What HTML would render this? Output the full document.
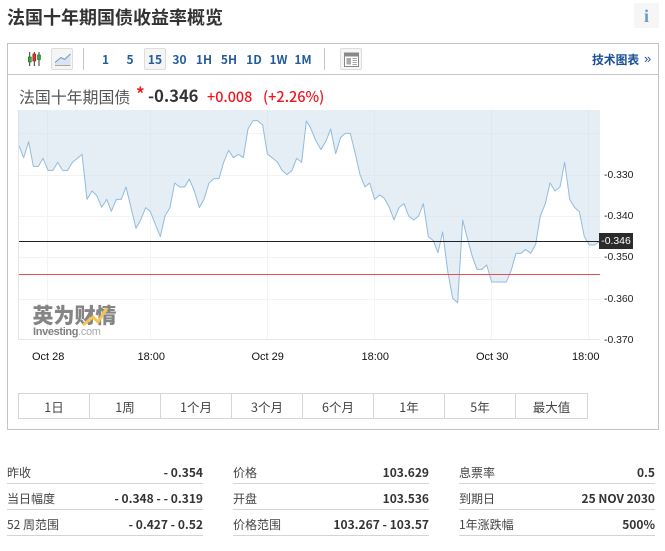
<!DOCTYPE html>
<html lang="zh">
<head>
<meta charset="utf-8">
<title>法国十年期国债收益率概览</title>
<style>
html,body{margin:0;padding:0;background:#fff}
body{position:relative;width:665px;height:551px;overflow:hidden;font-family:"Noto Sans CJK SC","Liberation Sans",sans-serif;color:#333}
.a{position:absolute;white-space:nowrap}
.title{left:7px;top:5px;font-size:18px;line-height:24px;font-weight:700;color:#333}
.info{left:634px;top:3px;width:25px;height:25px;background:#f6f6f6;border-radius:2px;text-align:center;font:bold 18px/26px "Liberation Serif",serif;color:#6b9ac9}
.box{left:7px;top:43px;width:650px;height:385px;border:1px solid #c4c4c4}
.bar{left:8px;top:74px;width:650px;height:1px;background:#c8c8c8}
.sep{top:48px;width:1px;height:22px;background:#c4c4c4}
.btn{top:48px;width:20px;height:20px;border:1px solid #ddd;background:#f5f5f5;border-radius:2px}
.n{top:51px;width:24px;text-align:center;font-size:12px;line-height:18px;font-weight:700;color:#245c9b}
.tech{left:592px;top:51px;font-size:11.8px;line-height:18px;font-weight:700;color:#1c5096}
.rng{top:393px;height:24px;width:70px;border:1px solid #d6d6d6;border-left:0;text-align:center;font-size:12.5px;line-height:25px;color:#444}
.l{font-size:12px;line-height:18px;color:#444}
.v{font-size:12px;line-height:18px;font-weight:700;color:#333;text-align:right;width:196px}
.u{height:1px;width:196px;background:#d4d4d4}
.ax{font-family:"Liberation Sans",sans-serif;font-size:11px;line-height:13px;color:#111}
.ay{font-family:"Liberation Sans",sans-serif;font-size:10.4px;line-height:13px;color:#222;left:604px}
</style>
</head>
<body>
<div class="a title">法国十年期国债收益率概览</div>
<div class="a info">i</div>
<div class="a box"></div>
<div class="a bar"></div>

<svg class="a" style="left:26px;top:50px" width="17" height="17" viewBox="0 0 17 17">
<path d="M3.7 2v14M8.300 2v14M13 2v14" stroke="#333" stroke-width="1"/>
<rect x="2.300" y="7" width="3" height="5" fill="#2fae3a" stroke="#1c6d25" stroke-width=".6"/>
<rect x="6.800" y="4" width="3" height="7" fill="#e5302d" stroke="#8c2020" stroke-width=".6"/>
<rect x="11.500" y="5" width="3" height="4.500" fill="#2fae3a" stroke="#1c6d25" stroke-width=".6"/>
</svg>
<div class="a btn" style="left:51px"></div>
<svg class="a" style="left:53px;top:50px" width="19" height="18" viewBox="0 0 19 18">
<path d="M2 12.500L8 7.500 11.500 9.500 17.500 4V15H2Z" fill="#dbe5f1"/>
<path d="M2 12.500L8 7.500 11.500 9.500 17.500 4" fill="none" stroke="#6b9ac9" stroke-width="1.100"/>
<path d="M2 15.500H17.500" stroke="#a8a8a8" stroke-width="1"/>
</svg>
<div class="a sep" style="left:83px"></div>
<div class="a btn" style="left:144px"></div>
<div class="a n" style="left:93.500px">1</div>
<div class="a n" style="left:118px">5</div>
<div class="a n" style="left:143px">15</div>
<div class="a n" style="left:167.500px">30</div>
<div class="a n" style="left:192px">1H</div>
<div class="a n" style="left:217px">5H</div>
<div class="a n" style="left:242px">1D</div>
<div class="a n" style="left:266.500px">1W</div>
<div class="a n" style="left:291px">1M</div>
<div class="a sep" style="left:324px"></div>
<div class="a btn" style="left:340px"></div>
<svg class="a" style="left:344px;top:52px" width="15" height="15" viewBox="0 0 15 15">
<rect x=".5" y="1" width="14" height="13.500" fill="#fff" stroke="#888" stroke-width="1"/>
<rect x="1" y="1.500" width="13" height="3" fill="#888"/>
<rect x="2.500" y="6" width="4.500" height="6.500" fill="#aaa"/>
<path d="M8.500 6.500H13M8.500 8.500H13M8.500 10.500H13M8.500 12.500H13" stroke="#aaa" stroke-width="1"/>
</svg>
<div class="a tech">技术图表</div>
<div class="a" style="left:644px;top:50px;font:400 13px/18px 'Liberation Sans',sans-serif;color:#1c5096">»</div>

<div class="a" style="left:19px;top:85px;font-size:15.900px;line-height:23px;color:#555">法国十年期国债</div>
<div class="a" style="left:136px;top:81px;font-size:17px;line-height:23px;font-weight:700;color:#f01b1b">*</div>
<div class="a" style="left:148px;top:83px;font-size:16.500px;line-height:24px;font-weight:700;color:#333">-0.346</div>
<div class="a" style="left:207px;top:86px;font-size:14.400px;line-height:22px;font-weight:500;color:#f3141c">+0.008</div>
<div class="a" style="left:263px;top:86px;font-size:14.500px;line-height:22px;font-weight:500;color:#f3141c">(+2.26%)</div>

<svg class="a" style="left:0;top:0" width="665" height="551" viewBox="0 0 665 551">
<path d="M18.500 110V339.500M47.500 110V339M150.500 110V339M267.500 110V339M374.500 110V339M491.500 110V339M588.500 110V339" stroke="#f3f3f3" stroke-width="1" fill="none"/>
<path d="M18 133.500H600M18 175.500H600M18 216.500H600M18 257.500H600M18 299.500H600" stroke="#f3f3f3" stroke-width="1" fill="none"/>
<path d="M18.500 110V339.500" stroke="#e6e6e6"/>
<path d="M18 339.500H600" stroke="#e6e6e6"/>
<g transform="translate(10,105) scale(.33333)">
<polygon fill="#c9deea" fill-opacity=".5" points="24,15 24,115 27,122 41,158 56,110 70,184 85,184 99,160 114,196 129,196 143,172 158,196 173,196 187,172 202,160 216,148 231,283 246,258 260,271 275,307 290,283 304,319 319,283 334,283 348,246 363,308 378,370 392,345 407,308 421,320 436,358 451,395 465,333 480,308 494,234 509,246 524,246 538,222 553,258 568,308 582,283 597,234 612,221 627,221 641,172 656,136 670,158 685,148 700,158 714,72 729,47 743,47 758,60 772,147 787,159 802,171 816,196 831,209 846,196 860,160 875,172 889,48 900,65 918,108 933,134 948,108 962,72 977,146 992,97 1006,85 1021,85 1036,147 1050,209 1065,246 1079,234 1094,283 1109,270 1123,280 1138,307 1152,345 1167,308 1182,296 1196,333 1211,345 1226,333 1240,296 1255,395 1270,407 1284,443 1298,381 1313,498 1328,580 1343,593 1358,345 1372,400 1387,455 1401,493 1416,493 1430,480 1445,531 1460,531 1475,531 1489,531 1504,495 1518,445 1533,445 1547,433 1562,445 1577,418 1591,333 1606,296 1620,234 1635,258 1650,246 1664,172 1679,283 1694,308 1708,320 1723,395 1738,420 1753,420 1770,410 1770,15"/>
<polyline fill="none" stroke="#93bbde" stroke-width="3" stroke-linejoin="round" points="27,122 41,158 56,110 70,184 85,184 99,160 114,196 129,196 143,172 158,196 173,196 187,172 202,160 216,148 231,283 246,258 260,271 275,307 290,283 304,319 319,283 334,283 348,246 363,308 378,370 392,345 407,308 421,320 436,358 451,395 465,333 480,308 494,234 509,246 524,246 538,222 553,258 568,308 582,283 597,234 612,221 627,221 641,172 656,136 670,158 685,148 700,158 714,72 729,47 743,47 758,60 772,147 787,159 802,171 816,196 831,209 846,196 860,160 875,172 889,48 900,65 918,108 933,134 948,108 962,72 977,146 992,97 1006,85 1021,85 1036,147 1050,209 1065,246 1079,234 1094,283 1109,270 1123,280 1138,307 1152,345 1167,308 1182,296 1196,333 1211,345 1226,333 1240,296 1255,395 1270,407 1284,443 1298,381 1313,498 1328,580 1343,593 1358,345 1372,400 1387,455 1401,493 1416,493 1430,480 1445,531 1460,531 1475,531 1489,531 1504,495 1518,445 1533,445 1547,433 1562,445 1577,418 1591,333 1606,296 1620,234 1635,258 1650,246 1664,172 1679,283 1694,308 1708,320 1723,395 1738,420 1753,420 1768,410"/>
</g>
<path d="M19 241.500H600" stroke="#222" stroke-width="1"/>
<path d="M19 274.500H600" stroke="#e8504f" stroke-width="1"/>
</svg>

<div class="a" style="left:32.500px;top:302px;font-size:21px;line-height:27px;font-weight:900;color:rgba(120,120,120,.9)">英为财情</div>
<svg class="a" style="left:80px;top:305px" width="30" height="24" viewBox="0 0 30 24">
<path d="M3 20L13 12 18 17 27 3" fill="none" stroke="#f6c453" stroke-width="3"/>
</svg>
<div class="a" style="left:33px;top:325px;font-family:'Liberation Sans',sans-serif;font-size:11px;line-height:14px;font-weight:700;letter-spacing:-.35px;color:#808080">Investing<span style="font-weight:400;color:#aaa">.com</span></div>

<div class="a ay" style="top:169px">-0.330</div>
<div class="a ay" style="top:210px">-0.340</div>
<div class="a ay" style="top:251px">-0.350</div>
<div class="a ay" style="top:293px">-0.360</div>
<div class="a ay" style="top:334px">-0.370</div>
<div class="a" style="left:599px;top:233px;width:34px;height:16px;background:#2b2b2b;color:#fff;text-align:center;font:10.400px/18px 'Liberation Sans',sans-serif">-0.346</div>

<div class="a ax" style="left:32px;top:351px">Oct 28</div>
<div class="a ax" style="left:137.500px;top:351px">18:00</div>
<div class="a ax" style="left:251.500px;top:351px">Oct 29</div>
<div class="a ax" style="left:361.500px;top:351px">18:00</div>
<div class="a ax" style="left:476px;top:351px">Oct 30</div>
<div class="a ax" style="left:572px;top:351px">18:00</div>

<div class="a rng" style="left:18px;border-left:1px solid #d6d6d6">1日</div>
<div class="a rng" style="left:90px">1周</div>
<div class="a rng" style="left:161px">1个月</div>
<div class="a rng" style="left:232px">3个月</div>
<div class="a rng" style="left:303px">6个月</div>
<div class="a rng" style="left:374px">1年</div>
<div class="a rng" style="left:445px">5年</div>
<div class="a rng" style="left:516px;width:71px">最大值</div>

<div class="a l" style="left:7px;top:464px">昨收</div>
<div class="a v" style="left:7px;top:464px">- 0.354</div>
<div class="a u" style="left:7px;top:483px"></div>
<div class="a l" style="left:7px;top:490px">当日幅度</div>
<div class="a v" style="left:7px;top:490px">- 0.348 - - 0.319</div>
<div class="a u" style="left:7px;top:509px"></div>
<div class="a l" style="left:7px;top:516px">52 周范围</div>
<div class="a v" style="left:7px;top:516px">- 0.427 - 0.52</div>
<div class="a u" style="left:7px;top:535px"></div>

<div class="a l" style="left:233px;top:464px">价格</div>
<div class="a v" style="left:233px;top:464px">103.629</div>
<div class="a u" style="left:233px;top:483px"></div>
<div class="a l" style="left:233px;top:490px">开盘</div>
<div class="a v" style="left:233px;top:490px">103.536</div>
<div class="a u" style="left:233px;top:509px"></div>
<div class="a l" style="left:233px;top:516px">价格范围</div>
<div class="a v" style="left:233px;top:516px">103.267 - 103.57</div>
<div class="a u" style="left:233px;top:535px"></div>

<div class="a l" style="left:459px;top:464px">息票率</div>
<div class="a v" style="left:459px;top:464px">0.5</div>
<div class="a u" style="left:459px;top:483px"></div>
<div class="a l" style="left:459px;top:490px">到期日</div>
<div class="a v" style="left:459px;top:490px">25 NOV 2030</div>
<div class="a u" style="left:459px;top:509px"></div>
<div class="a l" style="left:459px;top:516px">1年涨跌幅</div>
<div class="a v" style="left:459px;top:516px">500%</div>
<div class="a u" style="left:459px;top:535px"></div>
</body>
</html>
